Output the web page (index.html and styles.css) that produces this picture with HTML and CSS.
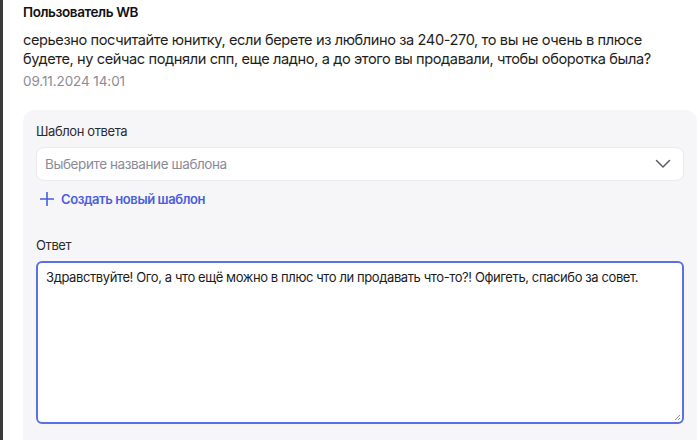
FILE: index.html
```html
<!DOCTYPE html>
<html lang="ru">
<head>
<meta charset="utf-8">
<link rel="stylesheet" href="styles.css">
</head>
<body>
<div class="edge"></div>
<main class="page">
  <section class="review">
    <div class="author">Пользователь WB</div>
    <p class="text">серьезно посчитайте юнитку, если берете из люблино за 240-270, то вы не очень в плюсе будете, ну сейчас подняли спп, еще ладно, а до этого вы продавали, чтобы оборотка была?</p>
    <div class="date">09.11.2024 14:01</div>
  </section>
  <section class="card">
    <div class="label">Шаблон ответа</div>
    <div class="select">
      <span class="placeholder">Выберите название шаблона</span>
      <svg class="chevron" width="16" height="10" viewBox="0 0 16 10"><path d="M1.5 1.5 L8 8 L14.5 1.5" fill="none" stroke="#5b5b6e" stroke-width="1.5" stroke-linecap="round" stroke-linejoin="round"/></svg>
    </div>
    <div class="create">
      <svg width="14" height="14" viewBox="0 0 14 14"><path d="M7 0.5 V13.5 M0.5 7 H13.5" stroke="#4a5ee0" stroke-width="1.6" stroke-linecap="round"/></svg>
      <span>Создать новый шаблон</span>
    </div>
    <div class="label answer-label">Ответ</div>
    <div class="answer">
      <div class="answer-text">Здравствуйте! Ого, а что ещё можно в плюс что ли продавать что-то?! Офигеть, спасибо за совет.</div>
      <svg class="grip" width="8" height="8" viewBox="0 0 8 8"><path d="M7 2 L2 7 M7 5 L5 7" stroke="#8a8a9a" stroke-width="1"/></svg>
    </div>
  </section>
</main>
</body>
</html>
```
FILE: styles.css
```css
html, body {
  margin: 0;
  padding: 0;
  background: #ffffff;
  overflow: hidden;
}
*, *::before, *::after {
  box-sizing: border-box;
}
body {
  width: 700px;
  height: 440px;
  display: flex;
  font-family: Inter, "Noto Sans", sans-serif;
  color: #1c1c1e;
  letter-spacing: -0.4px;
}
.edge {
  width: 3px;
  flex: none;
  background: #3a3a3a;
}
.page {
  flex: 1;
  padding: 3px 3px 0 20px;
}
.author {
  font-size: 13.5px;
  font-weight: 600;
  line-height: 18px;
  color: #111;
}
.text {
  margin: 10px 0 0;
  max-width: 640px;
  font-size: 14.6px;
  line-height: 19px;
  color: #1e1e20;
}
.date {
  margin-top: 3px;
  font-size: 13.5px;
  letter-spacing: -0.1px;
  line-height: 18px;
  color: #8c8c94;
}
.card {
  margin-top: 20px;
  background: #f6f6f8;
  border-radius: 12px 12px 0 0;
  padding: 12px 13px 0 13px;
  height: 330px;
}
.label {
  font-size: 13px;
  line-height: 18px;
  color: #2c2c30;
}
.select {
  margin-top: 7px;
  height: 34px;
  background: #fff;
  border: 1px solid #e9e9ef;
  border-radius: 8px;
  display: flex;
  align-items: center;
  justify-content: space-between;
  padding: 0 12px 0 8px;
}
.placeholder {
  font-size: 13.5px;
  color: #8b8b97;
}
.create {
  margin-top: 9px;
  display: flex;
  align-items: center;
  gap: 7px;
  padding-left: 4px;
  color: #4a5ee0;
  font-size: 13px;
  font-weight: 600;
  line-height: 18px;
}
.answer-label {
  margin-top: 28px;
}
.answer {
  position: relative;
  margin-top: 7px;
  height: 163px;
  background: #fff;
  border: 2px solid #5b6fe6;
  border-radius: 6px;
  padding: 5px 8px;
}
.answer-text {
  font-size: 13px;
  line-height: 18px;
  color: #1c1c1e;
}
.grip {
  position: absolute;
  right: 1px;
  bottom: 1px;
}
```
